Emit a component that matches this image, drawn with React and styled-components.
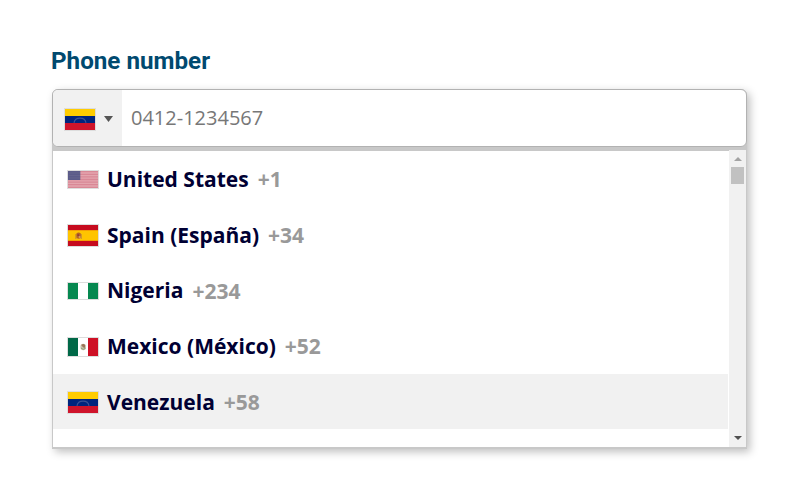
import React from "react";
import styled, { createGlobalStyle } from "styled-components";

const GlobalStyle = createGlobalStyle`
  * { box-sizing: border-box; }
  body { margin: 0; background: #fff; }
`;

const Page = styled.main`
  width: 800px;
  height: 500px;
  padding: 45px 53px 0 52px;
  overflow: hidden;
  font-family: "Open Sans", "Noto Sans", sans-serif;
`;

const Label = styled.label`
  display: block;
  height: 44px;
  margin-left: -1px;
  line-height: 33px;
  font-family: Roboto, sans-serif;
  font-size: 24.2px;
  font-weight: 700;
  color: #00496f;
  white-space: nowrap;
`;

const Picker = styled.section`
  height: 360px;
  display: flex;
  flex-direction: column;
  border-radius: 6px 6px 0 0;
  background: #c8c8c8;
  box-shadow: 3px 3px 9px rgba(0, 0, 0, 0.25);
`;

const Field = styled.div`
  height: 58px;
  flex: none;
  display: flex;
  border: 1px solid #b2b2b2;
  border-radius: 6px;
  background: #fff;
  overflow: hidden;
`;

const CountryButton = styled.div`
  width: 69px;
  flex: none;
  display: flex;
  align-items: center;
  gap: 8px;
  padding: 2px 0 0 11px;
  background: #f1f1f1;
`;

const PhoneInput = styled.input`
  flex: 1;
  border: 0;
  outline: 0;
  padding: 0 9px 2px;
  background: transparent;
  font: 400 20px "Open Sans", sans-serif;
  &::placeholder { color: #777; opacity: 1; }
`;

const Menu = styled.div`
  height: 299px;
  margin-top: 4px;
  display: flex;
  border: 1px solid #c8c8c8;
  border-width: 0 1px 2px;
  background: #fff;
`;

const List = styled.ul`
  flex: 1;
  margin: 0;
  padding: 0.7px 0 0;
  list-style: none;
`;

const Row = styled.li`
  width: 675px;
  height: 55.55px;
  display: flex;
  align-items: center;
  padding-left: 14px;
  font-size: 21px;
  line-height: 30px;
  white-space: nowrap;
  background: ${(p) => (p.$active ? "#f1f1f1" : "transparent")};
`;

const Name = styled.span`
  margin-left: 8px;
  margin-bottom: ${(p) => p.$lift || 0}px;
  font-weight: 700;
  color: #000033;
`;

const Code = styled.span`
  margin-left: 9px;
  font-weight: 700;
  color: #999;
`;

const Scrollbar = styled.div`
  width: 17px;
  margin-top: -1px;
  display: flex;
  flex-direction: column;
  align-items: center;
  background: #f1f1f1;
`;

const Thumb = styled.div`
  width: 13px;
  height: 17px;
  margin: 6px 0 auto;
  background: #c1c1c1;
`;

const ArrowIcon = styled.svg`
  display: block;
  flex: none;
  margin-top: ${(p) => p.$top || 0}px;
  margin-bottom: ${(p) => p.$bottom || 0}px;
`;

const FlagIcon = styled.svg`
  display: block;
  flex: none;
  margin-top: ${(p) => p.$drop || 0}px;
`;

function Arrow({ up, width = 8, height = 4, color, top, bottom }) {
  return (
    <ArrowIcon width={width} height={height} viewBox="0 0 8 4" preserveAspectRatio="none" $top={top} $bottom={bottom}>
      <path d={up ? "M0 4L4 0L8 4Z" : "M0 0H8L4 4Z"} fill={color} />
    </ArrowIcon>
  );
}

const flagHeights = { us: 17, es: 21, ng: 16, mx: 18, ve: 21 };

function FlagArt({ code }) {
  switch (code) {
    case "us":
      return (
        <>
          <rect width="30" height="17" fill="#e3a5ae" />
          <path d="M0 .7H30M0 3.3H30M0 5.9H30M0 8.5H30M0 11.1H30M0 13.7H30M0 16.3H30" stroke="#d98896" strokeWidth="1.3" />
          <rect width="12.3" height="9" fill="#5b5b89" />
          <path d="M1 2H12M1 4.5H12M1 7H12" stroke="#67678f" strokeWidth=".8" />
        </>
      );
    case "es":
      return (
        <>
          <rect width="30" height="21" fill="#c60b1e" />
          <rect y="5.2" width="30" height="10.6" fill="#ffc400" />
          <path d="M7.3 9H8.5V14H7.3ZM12.7 9H13.8V14H12.7Z" fill="#c78d35" />
          <path d="M8.4 8.5Q10.5 6.5 12.8 8.5V12.5Q10.6 15.2 8.4 12.5Z" fill="#b56325" />
          <path d="M9.3 9.3H11V11H9.3Z" fill="#913b39" />
          <circle cx="11.6" cy="12" r="1" fill="#d39a6d" />
        </>
      );
    case "ng":
      return (
        <>
          <rect width="30" height="16" fill="#fff" />
          <path d="M0 0H10V16H0ZM20 0H30V16H20Z" fill="#068850" />
        </>
      );
    case "mx":
      return (
        <>
          <rect width="30" height="18" fill="#fff" />
          <rect width="10" height="18" fill="#006847" />
          <rect x="20" width="10" height="18" fill="#ce1126" />
          <ellipse cx="15.2" cy="9" rx="2.8" ry="3.3" fill="#c9c6ae" />
          <path d="M13.2 7Q15.5 4.8 17.2 7.3L16.6 10.3L14.8 9.1Z" fill="#9b7358" />
          <path d="M13 10Q15 12.6 17.5 10.3" fill="none" stroke="#8c9b77" />
        </>
      );
    default:
      return (
        <>
          <rect width="30" height="21" fill="#cf142b" />
          <rect width="30" height="14" fill="#00247d" />
          <rect width="30" height="7" fill="#fc0" />
          <path d="M9 13.8C10 7.6 20 7.6 21 13.8" fill="none" stroke="#7180ae" strokeWidth="1.2" opacity=".5" />
        </>
      );
  }
}

function Flag({ code, drop }) {
  const height = flagHeights[code];
  return (
    <FlagIcon width="32" height={height + 2} viewBox={`-1 -1 32 ${height + 2}`} $drop={drop}>
      <rect x="-.5" y="-.5" width="31" height={height + 1} fill="none" stroke="#ddd" />
      <FlagArt code={code} />
    </FlagIcon>
  );
}

const countries = [
  { flag: "us", name: "United States", code: "+1" },
  { flag: "es", name: "Spain (España)", code: "+34", drop: 1.2 },
  { flag: "ng", name: "Nigeria", code: "+234", lift: 2 },
  { flag: "mx", name: "Mexico (México)", code: "+52", drop: 2 },
  { flag: "ve", name: "Venezuela", code: "+58", drop: 2.6, active: true },
];

export default function App() {
  return (
    <Page>
      <GlobalStyle />
      <Label htmlFor="phone">Phone number</Label>
      <Picker>
        <Field>
          <CountryButton>
            <Flag code="ve" />
            <Arrow width={9} height={6} color="#555" />
          </CountryButton>
          <PhoneInput id="phone" placeholder="0412-1234567" />
        </Field>
        <Menu>
          <List>
            {countries.map((c) => (
              <Row key={c.flag} $active={c.active}>
                <Flag code={c.flag} drop={c.drop} />
                <Name $lift={c.lift}>{c.name}</Name>
                <Code>{c.code}</Code>
              </Row>
            ))}
          </List>
          <Scrollbar>
            <Arrow up color="#a3a3a3" top={7} />
            <Thumb />
            <Arrow color="#505050" bottom={7} />
          </Scrollbar>
        </Menu>
      </Picker>
    </Page>
  );
}
